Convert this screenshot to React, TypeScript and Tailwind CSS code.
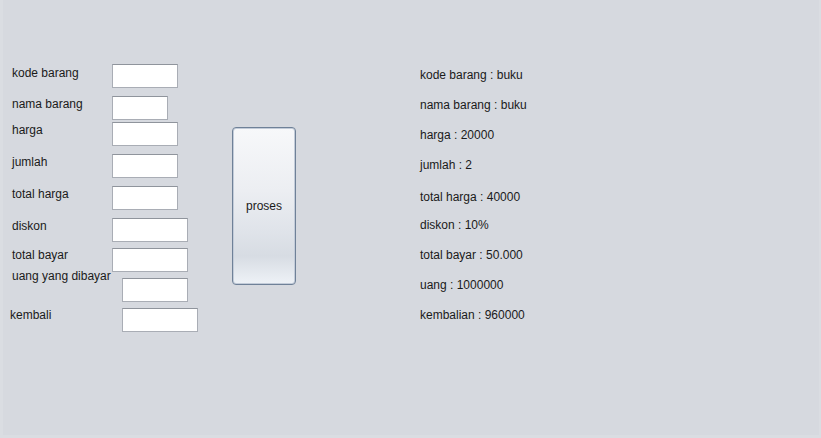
import React from "react";

type Row = {
  label: string;
  fieldWidth: string;
  rowMargin: string;
  labelShift: string;
  labelPad: string;
  fieldShift: string;
};

const rows: Row[] = [
  { label: "kode barang", fieldWidth: "w-[66px]", rowMargin: "mt-0", labelShift: "mt-[2px]", labelPad: "pl-3", fieldShift: "ml-0" },
  { label: "nama barang", fieldWidth: "w-[56px]", rowMargin: "mt-[8px]", labelShift: "mt-[1px]", labelPad: "pl-3", fieldShift: "ml-0" },
  { label: "harga", fieldWidth: "w-[66px]", rowMargin: "mt-[2px]", labelShift: "mt-[1px]", labelPad: "pl-3", fieldShift: "ml-0" },
  { label: "jumlah", fieldWidth: "w-[66px]", rowMargin: "mt-[8px]", labelShift: "mt-[1px]", labelPad: "pl-3", fieldShift: "ml-0" },
  { label: "total harga", fieldWidth: "w-[66px]", rowMargin: "mt-[8px]", labelShift: "mt-[1px]", labelPad: "pl-3", fieldShift: "ml-0" },
  { label: "diskon", fieldWidth: "w-[76px]", rowMargin: "mt-[8px]", labelShift: "mt-[1px]", labelPad: "pl-3", fieldShift: "ml-0" },
  { label: "total bayar", fieldWidth: "w-[76px]", rowMargin: "mt-[6px]", labelShift: "mt-0", labelPad: "pl-3", fieldShift: "ml-0" },
  { label: "uang yang dibayar", fieldWidth: "w-[66px]", rowMargin: "mt-[6px]", labelShift: "-mt-[9px]", labelPad: "pl-3", fieldShift: "ml-[10px]" },
  { label: "kembali", fieldWidth: "w-[76px]", rowMargin: "mt-[6px]", labelShift: "mt-0", labelPad: "pl-[10px]", fieldShift: "ml-[10px]" },
];

const results = [
  { text: "kode barang : buku", gap: "mt-0" },
  { text: "nama barang : buku", gap: "mt-[16px]" },
  { text: "harga : 20000", gap: "mt-[16px]" },
  { text: "jumlah : 2", gap: "mt-[16px]" },
  { text: "total harga : 40000", gap: "mt-[18px]" },
  { text: "diskon : 10%", gap: "mt-[14px]" },
  { text: "total bayar : 50.000", gap: "mt-[16px]" },
  { text: "uang : 1000000", gap: "mt-[16px]" },
  { text: "kembalian : 960000", gap: "mt-[16px]" },
];

const App: React.FC = () => {
  return (
    <div className="w-[821px] h-[438px] overflow-hidden bg-[#d6d9df] border-l-[3px] border-r-[2px] border-b-[3px] border-[#dadde2] flex font-['Liberation_Sans',Arial,sans-serif] text-[12px] leading-[14px] text-[#1a1a1a]">
      {/* form fields */}
      <div className="w-[232px] shrink-0 pt-[64px] -ml-[3px] flex flex-col">
        {rows.map((r) => (
          <div key={r.label} className={`flex h-6 items-start ${r.rowMargin}`}>
            <div className={`w-[112px] shrink-0 whitespace-nowrap ${r.labelPad} ${r.labelShift}`}>
              {r.label}
            </div>
            <input
              type="text"
              className={`h-6 ${r.fieldWidth} ${r.fieldShift} shrink-0 bg-white border border-[#a9adb5] border-t-[#8f949c] outline-none`}
            />
          </div>
        ))}
      </div>

      {/* button */}
      <button className="mt-[127px] w-16 h-[158px] shrink-0 rounded-[4px] border border-[#6f8198] shadow-[inset_0_0_0_1px_#c3ccd9] bg-[linear-gradient(to_bottom,#f7f8fa_0%,#eceef2_40%,#e0e4ea_65%,#d7dce3_82%,#eef2f7_100%)] text-[12px] text-[#1a1a1a] flex items-center justify-center">
        proses
      </button>

      {/* results */}
      <div className="ml-[124px] pt-[68px] flex flex-col">
        {results.map((r) => (
          <div key={r.text} className={`whitespace-nowrap ${r.gap}`}>
            {r.text}
          </div>
        ))}
      </div>
    </div>
  );
};

export default App;
